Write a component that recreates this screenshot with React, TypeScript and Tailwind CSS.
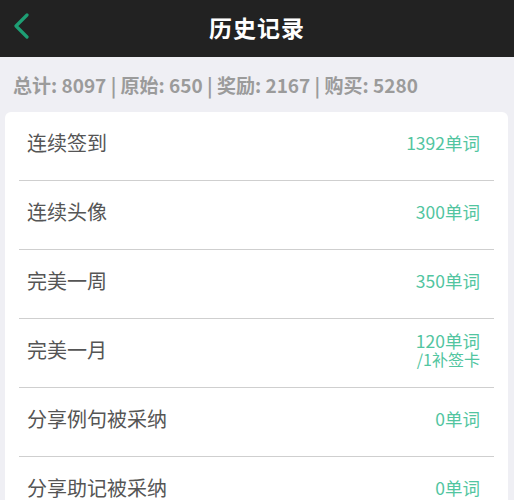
const rows: { label: string; value: string; extra?: string }[] = [
  { label: "连续签到", value: "1392单词" },
  { label: "连续头像", value: "300单词" },
  { label: "完美一周", value: "350单词" },
  { label: "完美一月", value: "120单词", extra: "/1补签卡" },
  { label: "分享例句被采纳", value: "0单词" },
  { label: "分享助记被采纳", value: "0单词" },
];

const font = {
  fontFamily: '"Noto Sans CJK SC", "Liberation Sans", sans-serif',
};

export default function App() {
  return (
    <div className="w-[514px] h-[500px] overflow-hidden bg-[#efeff4]" style={font}>
      <div className="relative h-[57px] bg-[#222222] flex items-center justify-center">
        <svg
          className="absolute left-[12px] top-[13px]"
          width="18"
          height="26"
          viewBox="0 0 18 26"
          fill="none"
        >
          <path
            d="M15 2 L4 13 L15 24"
            stroke="#1e9e74"
            strokeWidth="3.2"
            strokeLinecap="round"
            strokeLinejoin="round"
          />
        </svg>
        <h1 className="text-white text-[23px] font-semibold tracking-[1px] pb-[3px]">历史记录</h1>
      </div>
      <div className="h-[55px] flex items-center pl-[13px] pt-[2px] text-[19px] font-semibold text-[#9b9b9b]">
        总计: 8097 | 原始: 650 | 奖励: 2167 | 购买: 5280
      </div>
      <div className="ml-[5px] mr-[6px] bg-white rounded-[6px]">
        {rows.map((r, i) => (
          <div key={r.label}>
            {i > 0 && <div className="mx-[14px] h-px bg-[#cfcfcf]" />}
            <div className="h-[68px] flex items-center justify-between pl-[22px] pr-[28px] pb-[7px]">
              <span className="text-[20px] text-[#555555] leading-[24px]">{r.label}</span>
              <div className="flex flex-col items-end text-[#52c5a0] text-[17.5px] leading-[19px]">
                <span>{r.value}</span>
                {r.extra && <span className="text-[16px] leading-[18px]">{r.extra}</span>}
              </div>
            </div>
          </div>
        ))}
      </div>
    </div>
  );
}
